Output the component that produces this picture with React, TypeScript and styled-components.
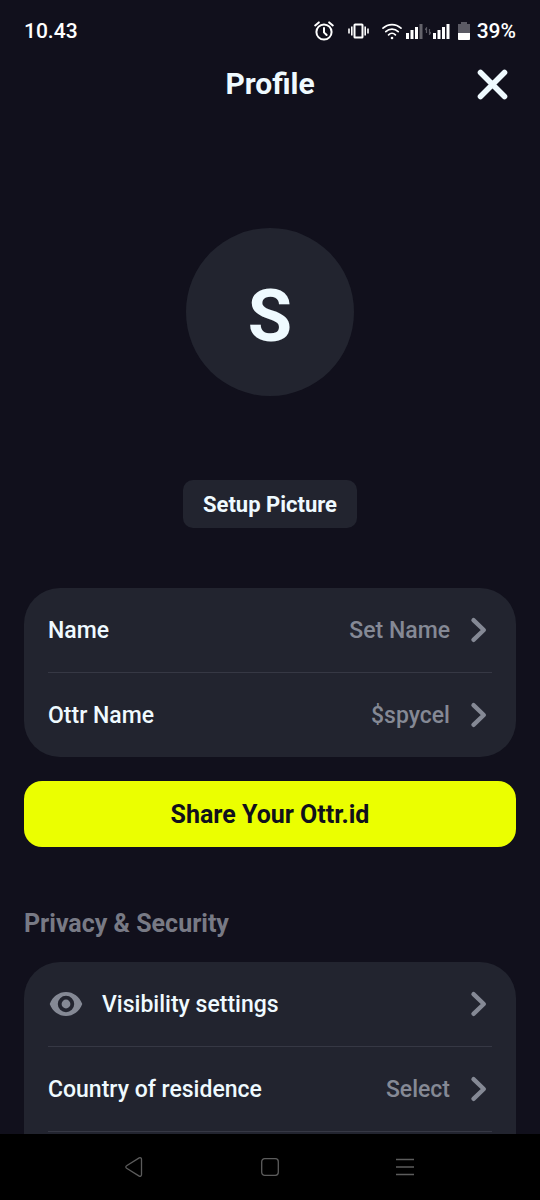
import React from "react";
import styled, { createGlobalStyle } from "styled-components";

const color = {
  page: "#11101c",
  surface: "#22242f",
  line: "#363844",
  text: "#effaff",
  muted: "#858995",
  heading: "#787a85",
  accent: "#ebff00",
};

const GlobalStyle = createGlobalStyle`
  * { box-sizing: border-box; }
  body {
    margin: 0;
    background: ${color.page};
    color: ${color.text};
    font-family: Roboto, "Liberation Sans", sans-serif;
  }
  button {
    border: 0;
    padding: 0;
    background: none;
    color: inherit;
    font: inherit;
    cursor: pointer;
  }
  svg { display: block; flex: none; }
`;

const Screen = styled.div`
  display: flex;
  flex-direction: column;
  height: 100vh;
`;

const StatusBar = styled.div`
  display: flex;
  flex: none;
  align-items: center;
  justify-content: space-between;
  height: 60px;
  padding: 2px 24px 0;
  color: #fff;
  font-size: 21px;
  font-weight: 500;
  line-height: 24px;
`;

const StatusIcons = styled.div`
  display: flex;
  align-items: center;
`;

const IconSlot = styled.span<{ $after: number }>`
  margin-right: ${(p) => p.$after}px;
`;

const Header = styled.header`
  display: grid;
  flex: none;
  grid-template-columns: 48px 1fr 48px;
  align-items: center;
  height: 48px;
  padding: 0 24px;
`;

const Title = styled.h1`
  grid-column: 2;
  margin: 0;
  font-size: 30px;
  font-weight: 700;
  line-height: 36px;
  text-align: center;
`;

const CloseButton = styled.button`
  justify-self: end;
  padding: 8px;
`;

const Content = styled.main`
  display: flex;
  flex: 1;
  flex-direction: column;
  min-height: 0;
  padding: 120px 24px 0;
  overflow: hidden;
`;

const Avatar = styled.div`
  display: flex;
  flex: none;
  align-self: center;
  align-items: center;
  justify-content: center;
  width: 168px;
  height: 168px;
  padding-top: 10px;
  border-radius: 50%;
  background: ${color.surface};
  font-size: 72px;
  font-weight: 700;
  line-height: 84px;
`;

const PictureButton = styled.button`
  flex: none;
  align-self: center;
  height: 48px;
  margin-top: 84px;
  padding: 2px 20px 0;
  border-radius: 10px;
  background: ${color.surface};
  font-size: 22px;
  font-weight: 700;
  line-height: 28px;
`;

const Card = styled.section<{ $continues?: boolean }>`
  flex: none;
  padding: 0 24px ${(p) => (p.$continues ? 84 : 0)}px;
  border-radius: 36px;
  background: ${color.surface};
`;

const Profile = styled.div`
  display: flex;
  flex: none;
  flex-direction: column;
  gap: 24px;
  margin-top: 60px;
`;

const RowButton = styled.button<{ $divided?: boolean }>`
  display: flex;
  align-items: center;
  width: 100%;
  height: ${(p) => (p.$divided ? 85 : 84)}px;
  border-bottom: ${(p) => (p.$divided ? `1px solid ${color.line}` : "0")};
  font-size: 23px;
  font-weight: 500;
  line-height: 28px;
  text-align: left;
`;

const RowIcon = styled.span`
  width: 54px;
`;

const RowLabel = styled.span`
  flex: 1;
  padding-top: 2px;
`;

const RowValue = styled.span`
  margin-right: 20px;
  padding-top: 2px;
  color: ${color.muted};
`;

const RowChevron = styled.span`
  margin-right: 5px;
`;

const ShareButton = styled.button`
  height: 66px;
  padding-top: 2px;
  border-radius: 18px;
  background: ${color.accent};
  color: #11101c;
  font-size: 25px;
  font-weight: 700;
  line-height: 30px;
`;

const SectionTitle = styled.h2`
  flex: none;
  margin: 60px 0 22px;
  color: ${color.heading};
  font-size: 25px;
  font-weight: 700;
  line-height: 33px;
`;

const NavBar = styled.nav`
  display: grid;
  flex: none;
  grid-template-columns: repeat(3, 1fr);
  height: 66px;
  padding: 0 12.5%;
  background: #000;
`;

const NavButton = styled.button`
  display: flex;
  align-items: center;
  justify-content: center;
`;

const AlarmIcon = () => (
  <svg width="20" height="20" viewBox="0 0 20 20" fill="none" stroke="#fff" strokeWidth="2" strokeLinecap="round" aria-hidden="true">
    <circle cx="10" cy="11" r="7.6" />
    <path d="M10 7v4.4l2.6 2.6M1.2 4.4 4.8 1.4M18.8 4.4 15.2 1.4" />
  </svg>
);

const VibrateIcon = () => (
  <svg width="21" height="16" viewBox="0 0 21 16" fill="none" stroke="#fff" strokeWidth="2" aria-hidden="true">
    <rect x="6.5" y="1.5" width="8" height="13" rx="0.6" />
    <path d="M3.8 3.5v9M17.2 3.5v9M1 5.5v5M20 5.5v5" strokeWidth="1.6" />
  </svg>
);

const WifiIcon = () => (
  <svg width="20" height="17" viewBox="0 0 20 17" fill="none" stroke="#fff" strokeWidth="1.7" strokeLinecap="round" aria-hidden="true">
    <path d="M1 5.2a13 13 0 0 1 18 0M3.8 8.6a9 9 0 0 1 12.4 0M6.6 11.8a5 5 0 0 1 6.8 0" />
    <circle cx="10" cy="15" r="1.3" fill="#fff" stroke="none" />
  </svg>
);

const SignalIcon = ({ weak = false }: { weak?: boolean }) => (
  <svg width="17" height="16" viewBox="0 0 17 16" fill="#fff" aria-hidden="true">
    <rect x="0" y="10" width="3" height="6" />
    <rect x="4.5" y="7" width="3" height="9" />
    <rect x="9" y="4" width="3" height="12" />
    <rect x="13.5" y="1" width="3" height="15" opacity={weak ? 0.35 : 1} />
  </svg>
);

const DataIcon = () => (
  <svg width="6" height="8" viewBox="0 0 6 8" fill="none" stroke="#5b5a64" strokeWidth="1.2" aria-hidden="true">
    <path d="M0 3 1.5 1v5M6 5 4.5 7.5V2" />
  </svg>
);

const BatteryIcon = () => (
  <svg width="12" height="18" viewBox="0 0 12 18" aria-hidden="true">
    <path d="M3 0h6v2h3v9H0V2h3z" fill="#5b5a64" />
    <path d="M0 11h12v6.2a.8.8 0 0 1-.8.8H.8a.8.8 0 0 1-.8-.8z" fill="#fff" />
  </svg>
);

const CloseIcon = () => (
  <svg width="32" height="32" viewBox="0 0 32 32" fill="none" stroke={color.text} strokeWidth="5.6" strokeLinecap="round" aria-hidden="true">
    <path d="M4.500 4.500l24 24M28.500 4.500l-24 24" />
  </svg>
);

const ChevronIcon = () => (
  <svg width="17" height="26" viewBox="0 0 17 26" fill="none" stroke={color.muted} strokeWidth="4.4" strokeLinecap="round" strokeLinejoin="round" aria-hidden="true">
    <path d="M3.5 3.2 13.8 13 3.5 22.8" />
  </svg>
);

const EyeIcon = () => (
  <svg width="36" height="26" viewBox="0 0 36 26" aria-hidden="true">
    <path
      fill={color.muted}
      fillRule="evenodd"
      d="M18 1C10.7 1 4.4 5.8 1.7 13 4.4 20.2 10.7 25 18 25s13.6-4.8 16.3-12C31.6 5.8 25.3 1 18 1zm0 20.2a8.2 8.2 0 1 1 0-16.4 8.2 8.2 0 0 1 0 16.4zm0-3.8a4.4 4.4 0 1 0 0-8.8 4.4 4.4 0 0 0 0 8.8z"
    />
  </svg>
);

const navStroke = { fill: "none", stroke: "#5c5c5c", strokeWidth: 1.3 };

const BackIcon = () => (
  <svg width="22" height="22" viewBox="0 0 22 22" {...navStroke} strokeLinejoin="round" aria-hidden="true">
    <path d="M15.2 1.9 2.6 9.7a1.5 1.5 0 0 0 0 2.6L15.2 20.1a1.5 1.5 0 0 0 2.3-1.3V3.2A1.5 1.5 0 0 0 15.2 1.9z" />
  </svg>
);

const HomeIcon = () => (
  <svg width="18" height="18" viewBox="0 0 18 18" {...navStroke} aria-hidden="true">
    <rect x="0.7" y="0.7" width="16.6" height="16.6" rx="3" />
  </svg>
);

const RecentsIcon = () => (
  <svg width="18" height="18" viewBox="0 0 18 18" {...navStroke} aria-hidden="true">
    <path d="M0 1.5h18M0 9h18M0 16.5h18" />
  </svg>
);

type RowProps = {
  label: string;
  value?: string;
  icon?: React.ReactNode;
  divided?: boolean;
};

const Row = ({ label, value, icon, divided }: RowProps) => (
  <RowButton type="button" $divided={divided}>
    {icon && <RowIcon>{icon}</RowIcon>}
    <RowLabel>{label}</RowLabel>
    {value && <RowValue>{value}</RowValue>}
    <RowChevron>
      <ChevronIcon />
    </RowChevron>
  </RowButton>
);

export default function App() {
  return (
    <>
      <GlobalStyle />
      <Screen>
        <StatusBar>
          <span>10.43</span>
          <StatusIcons>
            <IconSlot $after={14}><AlarmIcon /></IconSlot>
            <IconSlot $after={13}><VibrateIcon /></IconSlot>
            <IconSlot $after={4}><WifiIcon /></IconSlot>
            <IconSlot $after={2}><SignalIcon weak /></IconSlot>
            <IconSlot $after={2}><DataIcon /></IconSlot>
            <IconSlot $after={8}><SignalIcon /></IconSlot>
            <IconSlot $after={7}><BatteryIcon /></IconSlot>
            <span>39%</span>
          </StatusIcons>
        </StatusBar>
        <Header>
          <Title>Profile</Title>
          <CloseButton type="button" aria-label="Close">
            <CloseIcon />
          </CloseButton>
        </Header>
        <Content>
          <Avatar>S</Avatar>
          <PictureButton type="button">Setup Picture</PictureButton>
          <Profile>
            <Card>
              <Row label="Name" value="Set Name" divided />
              <Row label="Ottr Name" value="$spycel" />
            </Card>
            <ShareButton type="button">Share Your Ottr.id</ShareButton>
          </Profile>
          <SectionTitle>Privacy &amp; Security</SectionTitle>
          <Card $continues>
            <Row label="Visibility settings" icon={<EyeIcon />} divided />
            <Row label="Country of residence" value="Select" divided />
          </Card>
        </Content>
        <NavBar aria-label="System">
          <NavButton type="button" aria-label="Back"><BackIcon /></NavButton>
          <NavButton type="button" aria-label="Home"><HomeIcon /></NavButton>
          <NavButton type="button" aria-label="Recent apps"><RecentsIcon /></NavButton>
        </NavBar>
      </Screen>
    </>
  );
}
